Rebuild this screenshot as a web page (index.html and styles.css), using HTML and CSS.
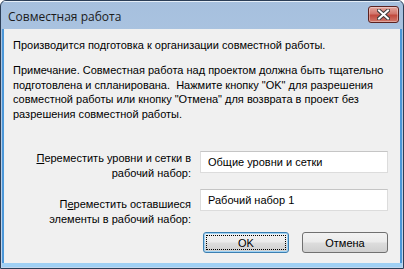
FILE: index.html
```html
<!DOCTYPE html>
<html lang="ru">
<head>
    <meta charset="UTF-8">
    <title>Совместная работа</title>
    <link rel="stylesheet" href="styles.css">
</head>
<body>
    <div class="window">
        <div class="title-bar">
            <span class="title">Совместная работа</span>
            <button class="close-btn" aria-label="Закрыть">
                <svg width="13" height="11" viewBox="0 0 13 11">
                    <path d="M2 1.5 L11 9.5 M11 1.5 L2 9.5" stroke="#3b3b3b" stroke-width="4" stroke-linecap="square"/>
                    <path d="M2 1.5 L11 9.5 M11 1.5 L2 9.5" stroke="#fff" stroke-width="2" stroke-linecap="square"/>
                </svg>
            </button>
        </div>
        <div class="client">
            <p class="intro">Производится подготовка к организации совместной работы.</p>
            <p class="note">Примечание. Совместная работа над проектом должна быть тщательно подготовлена и спланирована.&nbsp; Нажмите кнопку "OK" для разрешения совместной работы или кнопку "Отмена" для возврата в проект без разрешения совместной работы.</p>

            <div class="fields">
                <label class="field-label first" for="levels"><u>П</u>ереместить уровни и сетки в<br>рабочий набор:</label>
                <input class="field-input" type="text" id="levels" value="Общие уровни и сетки">

                <label class="field-label second" for="others">П<u>е</u>реместить оставшиеся<br>элементы в рабочий набор:</label>
                <input class="field-input" type="text" id="others" value="Рабочий набор 1">
            </div>

            <div class="buttons">
                <button class="btn default"><span class="focus">OK</span></button>
                <button class="btn">Отмена</button>
            </div>
        </div>
    </div>
</body>
</html>
```

FILE: styles.css
```css
body {
    margin: 0;
    font-family: "Liberation Sans", Arial, sans-serif;
    background: #fff;
}

.window {
    width: 404px;
    height: 269px;
    box-sizing: border-box;
    border: 1px solid #2b3e57;
    border-radius: 6px 6px 0 0;
    background: linear-gradient(#a6c0de, #c3d6ed);
    display: flex;
    flex-direction: column;
    overflow: hidden;
}

.title-bar {
    height: 28px;
    flex: none;
    display: flex;
    align-items: flex-start;
    justify-content: space-between;
    padding: 0 4px 0 7px;
    box-shadow: inset 0 1px 0 #e4eef8;
}

.title {
    font-family: "Open Sans", "Liberation Sans", sans-serif;
    font-size: 12px;
    color: #1b1b1b;
    margin-top: 7px;
}

.close-btn {
    width: 31px;
    height: 17px;
    margin-top: 5px;
    padding: 0;
    border: 1px solid #5b2220;
    border-radius: 3px;
    background: linear-gradient(#e3a89f 0%, #d2766c 45%, #c14a3e 55%, #d0786a 100%);
    box-shadow: inset 0 0 0 1px rgba(255,255,255,0.35);
    display: flex;
    align-items: center;
    justify-content: center;
}

.client {
    flex: 1;
    min-height: 0;
    margin: 0 1px 5px 1px;
    border-left: 2px solid #4c97d8;
    border-right: 2px solid #4c97d8;
    background: #f0f0f0;
    padding: 9px 12px 0 9px;
    font-size: 11px;
    color: #000;
    box-shadow: 0 4px 0 #9fd0f4;
}

.intro {
    margin: 0;
    line-height: 14px;
}

.note {
    margin: 11px 0 0;
    line-height: 14.6px;
}

.fields {
    display: grid;
    grid-template-columns: 1fr 188px;
    column-gap: 9px;
    row-gap: 9px;
    align-items: start;
    margin-top: 30px;
}

.field-label {
    text-align: right;
    line-height: 14.5px;
}

.field-label.first {
    margin-top: 0;
}

.field-label.second {
    margin-top: 8px;
}

.field-input {
    height: 22px;
    box-sizing: border-box;
    margin: 0;
    border: 1px solid #dcdcdc;
    border-top-color: #c5c5c5;
    background: #fff;
    padding: 0 7px;
    font-family: "Liberation Sans", Arial, sans-serif;
    font-size: 11px;
    color: #000;
}

.buttons {
    display: flex;
    justify-content: flex-end;
    gap: 13px;
    margin-top: 6px;
}

.btn {
    width: 86px;
    height: 21px;
    box-sizing: border-box;
    padding: 0;
    border: 1px solid #707070;
    border-radius: 3px;
    background: linear-gradient(#f2f2f2 0%, #ebebeb 48%, #dddddd 52%, #cfcfcf 100%);
    font-family: "Liberation Sans", Arial, sans-serif;
    font-size: 11px;
    color: #000;
}

.btn.default {
    border-color: #3c7fb1;
    box-shadow: inset 0 0 0 1px #9fd3f5;
    padding: 2px;
}

.focus {
    display: flex;
    align-items: center;
    justify-content: center;
    height: 100%;
    box-sizing: border-box;
    border: 1px dotted #000;
}
```
